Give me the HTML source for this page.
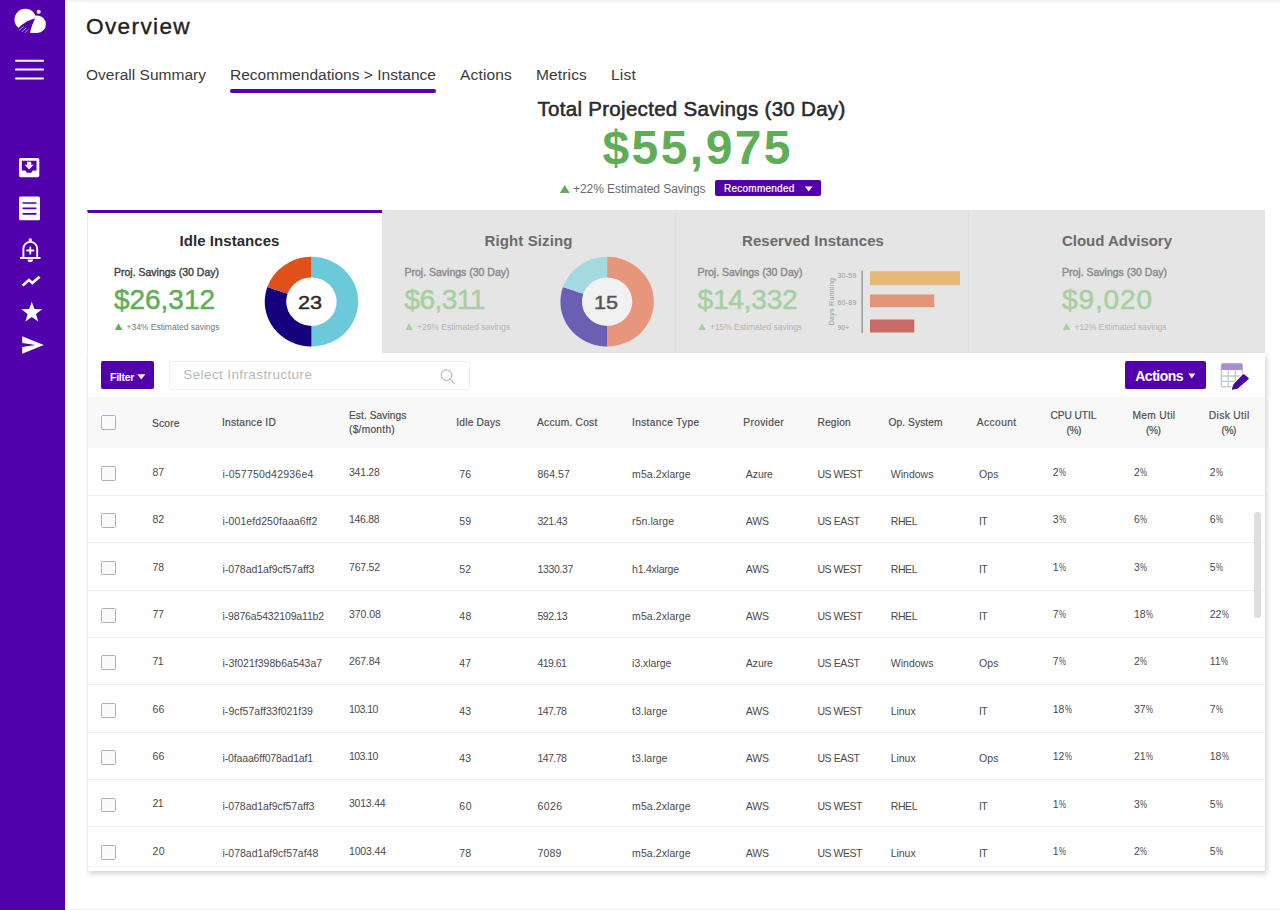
<!DOCTYPE html>
<html lang="en">
<head>
<meta charset="utf-8">
<title>Overview</title>
<style>
*{box-sizing:border-box;margin:0;padding:0}
html,body{width:1280px;height:910px;overflow:hidden;background:#fff}
body{position:relative;font-family:"Liberation Sans",sans-serif}
.t{position:absolute;white-space:nowrap;display:block}
.abs{position:absolute}
.pc{display:inline-block;letter-spacing:0;transform:scaleX(.74);transform-origin:0 50%;margin-left:.3px}
#side{left:0;top:0;width:65px;height:910px;background:#5200ac}
#topline{left:65px;top:0;width:1215px;height:2px;background:#f4f4f4}
#botline{left:65px;top:908.5px;width:1215px;height:1.5px;background:#efefef}
#tabline{left:230px;top:89px;width:206px;height:3.5px;border-radius:2px;background:#5200ac}
#cards{left:87px;top:210px;width:1178px;height:143.5px;background:#e5e5e5}
#card1{left:87px;top:210px;width:294.5px;height:143px;background:#fff;border-top:3.75px solid #5200ac;border-left:1px solid #ececec}
.div{top:211px;width:1px;height:141px;background:#dedede}
#panel{left:87px;top:353px;width:1178px;height:518px;background:#fff;box-shadow:2px 3px 5px rgba(0,0,0,.17);border-left:1px solid #ececec}
#thead{left:88px;top:397px;width:1177px;height:50.5px;background:#f8f8f8}
.rl{left:88px;width:1177px;height:1px;background:#eee}
.cb{left:101px;width:14.8px;height:14.8px;border:1.4px solid #b0b0b0;border-radius:1.5px;background:#fafafa}
.btn{background:#5200ac;border-radius:2px}
#search{left:168.5px;top:360.5px;width:301.5px;height:29px;border:1px solid #efefef;border-radius:2px;background:#fff}
#thumb{left:1254px;top:512px;width:6.5px;height:106px;border-radius:3px;background:#dedede}
</style>
</head>
<body>
<div class="abs" id="topline"></div>
<div class="abs" id="botline"></div>
<div class="abs" id="side"></div>
<!--ICONS-->
<div class="abs" id="tabline"></div>
<div class="abs" id="cards"></div>
<div class="abs div" style="left:675px"></div>
<div class="abs div" style="left:968px"></div>
<div class="abs" id="panel"></div>
<div class="abs" id="card1"></div>
<div class="abs" id="thead"></div>
<div class="abs rl" style="top:494.9px"></div>
<div class="abs rl" style="top:542.2px"></div>
<div class="abs rl" style="top:589.5px"></div>
<div class="abs rl" style="top:636.9px"></div>
<div class="abs rl" style="top:684.2px"></div>
<div class="abs rl" style="top:731.6px"></div>
<div class="abs rl" style="top:779.0px"></div>
<div class="abs rl" style="top:826.3px"></div>
<div class="abs rl" style="top:865.5px;background:#f3f3f3"></div>
<div class="abs cb" style="top:414.8px"></div>
<div class="abs cb" style="top:465.8px"></div>
<div class="abs cb" style="top:513.2px"></div>
<div class="abs cb" style="top:560.6px"></div>
<div class="abs cb" style="top:608.0px"></div>
<div class="abs cb" style="top:655.4px"></div>
<div class="abs cb" style="top:702.8px"></div>
<div class="abs cb" style="top:750.2px"></div>
<div class="abs cb" style="top:797.6px"></div>
<div class="abs cb" style="top:845.0px"></div>
<div class="abs btn" style="left:714.5px;top:180px;width:106px;height:16px"></div>
<div class="abs btn" style="left:101.3px;top:361.4px;width:52.5px;height:28px"></div>
<div class="abs btn" style="left:1124.7px;top:361.4px;width:81.3px;height:28px"></div>
<div class="abs" id="search"></div>
<div class="abs" id="thumb"></div>
<svg class="abs" style="left:0;top:0" width="1280" height="910" viewBox="0 0 1280 910">
<g transform="translate(311.45 301.7) scale(1 .96)"><circle cx="0" cy="0" r="25.7" fill="#fff"/><path d="M0.00 -46.70A46.7 46.7 0 0 1 0.00 46.70L0.00 25.20A25.2 25.2 0 0 0 0.00 -25.20Z" fill="#6cc9da"/><path d="M0.00 46.70A46.7 46.7 0 0 1 -44.16 -15.20L-23.83 -8.20A25.2 25.2 0 0 0 0.00 25.20Z" fill="#15007d"/><path d="M-44.16 -15.20A46.7 46.7 0 0 1 -0.00 -46.70L-0.00 -25.20A25.2 25.2 0 0 0 -23.83 -8.20Z" fill="#e0501b"/></g>
<g transform="translate(607.1 301.7) scale(1 .96)"><circle cx="0" cy="0" r="25.7" fill="#f1f1f1"/><path d="M0.00 -46.70A46.7 46.7 0 0 1 0.00 46.70L0.00 25.20A25.2 25.2 0 0 0 0.00 -25.20Z" fill="#e8967b"/><path d="M0.00 46.70A46.7 46.7 0 0 1 -44.16 -15.20L-23.83 -8.20A25.2 25.2 0 0 0 0.00 25.20Z" fill="#6b5fb3"/><path d="M-44.16 -15.20A46.7 46.7 0 0 1 -0.00 -46.70L-0.00 -25.20A25.2 25.2 0 0 0 -23.83 -8.20Z" fill="#a5d9e1"/></g>
<rect x="861.6" y="270.5" width="1" height="62.5" fill="#777"/>
<rect x="870" y="271.2" width="90" height="14" fill="#e9b978"/>
<rect x="870" y="294.5" width="64.3" height="12.7" fill="#e29579"/>
<rect x="870" y="319.5" width="44.3" height="13" fill="#ca6b69"/>
<path d="M559.8 193L564.75 184.9L569.7 193Z" fill="#5fae57"/>
<path d="M114.8 330L118.55 323.3L122.3 330Z" fill="#5fae57"/>
<path d="M405.3 330L409.05 323.3L412.8 330Z" fill="#a6d0a0"/>
<path d="M698.3 330L702.05 323.3L705.8 330Z" fill="#a6d0a0"/>
<path d="M1062.8 330L1066.55 323.3L1070.3 330Z" fill="#a6d0a0"/>
<path d="M804.9 186.4L812.5 186.4L808.7 191.4Z" fill="#fff"/>
<path d="M137.3 374.2L145.3 374.2L141.3 379.6Z" fill="#fff"/>
<path d="M1188.4 373.6L1195.2 373.6L1191.8000000000002 378.4Z" fill="#fff"/>
<circle cx="446.5" cy="375.2" r="5.3" fill="none" stroke="#b5b5b5" stroke-width="1.1"/><path d="M450.4 379.3L454.3 383.3" stroke="#b5b5b5" stroke-width="1.1" stroke-linecap="round"/>
<g><rect x="1221.3" y="363.6" width="21" height="23.2" rx="1.5" fill="#fff" stroke="#c9c9c9" stroke-width="1.4"/><path d="M1221.3 365.1a1.5 1.5 0 0 1 1.5-1.5h18a1.5 1.5 0 0 1 1.5 1.5v5h-21z" fill="#a98bd6"/><path d="M1221.3 376h21M1221.3 381.3h21M1228.3 370.6v16.2M1235.3 370.6v16.2" stroke="#c9c9c9" stroke-width="1.3" fill="none"/><path d="M1242.2 374.2q1.2-1.2 2.6-.1l3.9 3.1q1.3 1.2.1 2.5L1237.6 389.4 1230.8 390.6 1232.7 384.3z" fill="#4a00a0" stroke="#fff" stroke-width="1.2" stroke-linejoin="round"/></g>
<g fill="#fff"><circle cx="25.4" cy="19.6" r="10.9"/><circle cx="37.2" cy="24.2" r="8.7"/><rect x="24" y="25" width="14" height="7.9"/><circle cx="38.7" cy="11.7" r="2"/></g>
<path d="M35.2 18.3Q27.5 20.4 22.6 24.3L15.5 30.2 18 35 29.7 33.4Q31.6 25 35.2 18.3Z" fill="#5200ac"/><path d="M19.3 30.3l4.6-3.9M21.9 31.9l4.2-3.9M24.9 32.8l3.2-3.4" stroke="#fff" stroke-opacity=".55" stroke-width="1" fill="none"/>
<rect x="15" y="59.8" width="29" height="2" rx="1" fill="#fff"/>
<rect x="15" y="68.6" width="29" height="2" rx="1" fill="#fff"/>
<rect x="15" y="77.4" width="29" height="2" rx="1" fill="#fff"/>
<g><rect x="19" y="158" width="20.3" height="19.2" rx="1.8" fill="#fff"/><path d="M21.8 160.8h14.7v9.6h-3.6l-1.6 2.4h-4.3l-1.6-2.4h-3.6z" fill="#5200ac"/><path d="M27 161.8h4.2v3h2.5l-4.6 4.6-4.6-4.6h2.5z" fill="#fff"/></g>
<g><rect x="19" y="196.6" width="21" height="23.6" rx="1.5" fill="#fff"/><path d="M22.6 203h13.8M22.6 208.4h13.8M22.6 213.8h13.8" stroke="#5200ac" stroke-width="1.7"/></g>
<g fill="none" stroke="#fff" stroke-width="1.9" stroke-linejoin="round" stroke-linecap="round"><path d="M20.8 258h19M23.4 257.8v-9a6.9 6.9 0 0 1 13.8 0v9"/><path d="M30.3 247.3v6.4M27.1 250.5h6.4" stroke-width="1.8"/></g><circle cx="30.3" cy="239.9" r="1.7" fill="#fff"/><path d="M27.6 259.6h5.4a2.7 2.7 0 0 1-5.4 0z" fill="#fff"/>
<path d="M22.6 285.6l6.3-5.6 3.4 3 7.3-6.2" fill="none" stroke="#fff" stroke-width="2.6" stroke-linejoin="miter"/>
<path d="M31.80 301.70L34.39 309.04L42.17 309.23L35.98 313.96L38.21 321.42L31.80 317.00L25.39 321.42L27.62 313.96L21.43 309.23L29.21 309.04Z" fill="#fff"/>
<path d="M22.2 336.2L43.8 345 22.2 353.8l0-6.9L35.5 345 22.2 343.1z" fill="#fff"/>
</svg>
<span class="t" style="left:802.5px;top:296.5px;width:56px;text-align:center;font-size:7px;line-height:9px;color:#999;transform:rotate(-90deg);letter-spacing:.3px">Days Running</span>
<span class="t" style="left:86.0px;top:11.6px;font-size:22.6px;line-height:29px;color:#222;letter-spacing:1.354px;-webkit-text-stroke:0.35px #222;">Overview</span>
<span class="t" style="left:86.0px;top:64.9px;font-size:15.5px;line-height:20px;color:#3a3a3a;letter-spacing:0.019px;">Overall Summary</span>
<span class="t" style="left:230.0px;top:64.9px;font-size:15.5px;line-height:20px;color:#3a3a3a;letter-spacing:0.019px;">Recommendations &gt; Instance</span>
<span class="t" style="left:460.0px;top:64.9px;font-size:15.5px;line-height:20px;color:#3a3a3a;letter-spacing:0.165px;">Actions</span>
<span class="t" style="left:536.0px;top:64.9px;font-size:15.5px;line-height:20px;color:#3a3a3a;letter-spacing:0.150px;">Metrics</span>
<span class="t" style="left:611.0px;top:64.9px;font-size:15.5px;line-height:20px;color:#3a3a3a;letter-spacing:0.219px;">List</span>
<span class="t" style="left:537.5px;top:95.2px;font-size:20.5px;line-height:27px;color:#2a2a2a;letter-spacing:0.296px;-webkit-text-stroke:0.55px #2a2a2a;">Total Projected Savings (30 Day)</span>
<span class="t" style="left:602.5px;top:117.0px;font-size:48px;line-height:62px;color:#5fae57;font-weight:700;letter-spacing:2.426px;">$55,975</span>
<span class="t" style="left:573.0px;top:180.8px;font-size:12px;line-height:16px;color:#6a6a6a;letter-spacing:-0.057px;">+22% Estimated Savings</span>
<span class="t" style="left:724.0px;top:181.9px;font-size:10px;line-height:13px;color:#fff;letter-spacing:0.244px;-webkit-text-stroke:0.2px #fff;">Recommended</span>
<span class="t" style="left:179.5px;top:231.2px;font-size:15px;line-height:20px;color:#2b2b2b;font-weight:700;letter-spacing:0.056px;">Idle Instances</span>
<span class="t" style="left:114.0px;top:264.8px;font-size:10.5px;line-height:14px;color:#444;letter-spacing:-0.002px;-webkit-text-stroke:0.4px #444;">Proj. Savings (30 Day)</span>
<span class="t" style="left:114.0px;top:281.8px;font-size:28px;line-height:36px;color:#5fae57;letter-spacing:-0.031px;-webkit-text-stroke:0.5px #5fae57;">$26,312</span>
<span class="t" style="left:126.5px;top:321.5px;font-size:8.5px;line-height:11px;color:#777;letter-spacing:-0.015px;">+34% Estimated savings</span>
<span class="t" style="left:484.5px;top:231.2px;font-size:15px;line-height:20px;color:#6b6b6b;font-weight:700;letter-spacing:0.112px;">Right Sizing</span>
<span class="t" style="left:404.5px;top:264.8px;font-size:10.5px;line-height:14px;color:#8a8a8a;letter-spacing:-0.002px;-webkit-text-stroke:0.4px #8a8a8a;">Proj. Savings (30 Day)</span>
<span class="t" style="left:404.5px;top:281.8px;font-size:28px;line-height:36px;color:#a6d0a0;letter-spacing:-0.550px;-webkit-text-stroke:0.5px #a6d0a0;">$6,311</span>
<span class="t" style="left:417.0px;top:321.5px;font-size:8.5px;line-height:11px;color:#b4b4b4;letter-spacing:-0.015px;">+26% Estimated savings</span>
<span class="t" style="left:742.0px;top:231.2px;font-size:15px;line-height:20px;color:#6b6b6b;font-weight:700;letter-spacing:0.060px;">Reserved Instances</span>
<span class="t" style="left:697.5px;top:264.8px;font-size:10.5px;line-height:14px;color:#8a8a8a;letter-spacing:-0.002px;-webkit-text-stroke:0.4px #8a8a8a;">Proj. Savings (30 Day)</span>
<span class="t" style="left:697.5px;top:281.8px;font-size:28px;line-height:36px;color:#a6d0a0;letter-spacing:-0.174px;-webkit-text-stroke:0.5px #a6d0a0;">$14,332</span>
<span class="t" style="left:710.0px;top:321.5px;font-size:8.5px;line-height:11px;color:#b4b4b4;letter-spacing:-0.060px;">+15% Estimated savings</span>
<span class="t" style="left:1062.0px;top:231.2px;font-size:15px;line-height:20px;color:#6b6b6b;font-weight:700;letter-spacing:-0.021px;">Cloud Advisory</span>
<span class="t" style="left:1062.0px;top:264.8px;font-size:10.5px;line-height:14px;color:#8a8a8a;letter-spacing:-0.002px;-webkit-text-stroke:0.4px #8a8a8a;">Proj. Savings (30 Day)</span>
<span class="t" style="left:1062.0px;top:281.8px;font-size:28px;line-height:36px;color:#a6d0a0;letter-spacing:0.893px;-webkit-text-stroke:0.5px #a6d0a0;">$9,020</span>
<span class="t" style="left:1074.5px;top:321.5px;font-size:8.5px;line-height:11px;color:#b4b4b4;letter-spacing:-0.060px;">+12% Estimated savings</span>
<span class="t" style="left:298.3px;top:289.7px;font-size:19px;line-height:25px;color:#2a2a2a;transform:scaleX(1.14);transform-origin:0 50%;-webkit-text-stroke:0.45px #2a2a2a;">23</span>
<span class="t" style="left:594.2px;top:289.7px;font-size:19px;line-height:25px;color:#555;transform:scaleX(1.14);transform-origin:0 50%;-webkit-text-stroke:0.45px #555;">15</span>
<span class="t" style="left:837.5px;top:271.3px;font-size:6.8px;line-height:9px;color:#9a9a9a;letter-spacing:0.322px;">30-59</span>
<span class="t" style="left:837.5px;top:297.5px;font-size:6.8px;line-height:9px;color:#9a9a9a;letter-spacing:0.322px;">60-89</span>
<span class="t" style="left:837.5px;top:322.5px;font-size:6.8px;line-height:9px;color:#9a9a9a;letter-spacing:-0.010px;">90+</span>
<span class="t" style="left:110.0px;top:369.8px;font-size:10.5px;line-height:14px;color:#fff;font-weight:700;letter-spacing:-0.279px;">Filter</span>
<span class="t" style="left:183.3px;top:366.0px;font-size:13.5px;line-height:18px;color:#b9b9b9;letter-spacing:0.390px;">Select Infrastructure</span>
<span class="t" style="left:1135.2px;top:366.5px;font-size:14px;line-height:18px;color:#fff;font-weight:700;letter-spacing:-0.478px;">Actions</span>
<span class="t" style="left:152.0px;top:416.8px;font-size:10.2px;line-height:13px;color:#4c4c4c;letter-spacing:0.215px;-webkit-text-stroke:0.18px #4c4c4c;">Score</span>
<span class="t" style="left:222.0px;top:416.1px;font-size:10.2px;line-height:13px;color:#4c4c4c;letter-spacing:0.224px;-webkit-text-stroke:0.18px #4c4c4c;">Instance ID</span>
<span class="t" style="left:349.0px;top:408.8px;font-size:10.2px;line-height:13px;color:#4c4c4c;letter-spacing:0.065px;-webkit-text-stroke:0.18px #4c4c4c;">Est. Savings</span>
<span class="t" style="left:349.0px;top:422.8px;font-size:10.2px;line-height:13px;color:#4c4c4c;letter-spacing:0.266px;-webkit-text-stroke:0.18px #4c4c4c;">($/month)</span>
<span class="t" style="left:456.3px;top:416.1px;font-size:10.2px;line-height:13px;color:#4c4c4c;letter-spacing:0.192px;-webkit-text-stroke:0.18px #4c4c4c;">Idle Days</span>
<span class="t" style="left:537.0px;top:416.1px;font-size:10.2px;line-height:13px;color:#4c4c4c;letter-spacing:0.250px;-webkit-text-stroke:0.18px #4c4c4c;">Accum. Cost</span>
<span class="t" style="left:632.0px;top:416.1px;font-size:10.2px;line-height:13px;color:#4c4c4c;letter-spacing:0.327px;-webkit-text-stroke:0.18px #4c4c4c;">Instance Type</span>
<span class="t" style="left:743.3px;top:416.1px;font-size:10.2px;line-height:13px;color:#4c4c4c;letter-spacing:0.345px;-webkit-text-stroke:0.18px #4c4c4c;">Provider</span>
<span class="t" style="left:817.4px;top:416.1px;font-size:10.2px;line-height:13px;color:#4c4c4c;letter-spacing:0.217px;-webkit-text-stroke:0.18px #4c4c4c;">Region</span>
<span class="t" style="left:888.6px;top:416.1px;font-size:10.2px;line-height:13px;color:#4c4c4c;letter-spacing:0.068px;-webkit-text-stroke:0.18px #4c4c4c;">Op. System</span>
<span class="t" style="left:976.8px;top:416.1px;font-size:10.2px;line-height:13px;color:#4c4c4c;letter-spacing:0.427px;-webkit-text-stroke:0.18px #4c4c4c;">Account</span>
<span class="t" style="left:1050.4px;top:408.8px;font-size:10.2px;line-height:13px;color:#4c4c4c;letter-spacing:-0.065px;-webkit-text-stroke:0.18px #4c4c4c;">CPU UTIL</span>
<span class="t" style="left:1066.5px;top:423.8px;font-size:10.2px;line-height:13px;color:#4c4c4c;letter-spacing:-0.448px;-webkit-text-stroke:0.18px #4c4c4c;">(%)</span>
<span class="t" style="left:1132.4px;top:408.8px;font-size:10.2px;line-height:13px;color:#4c4c4c;letter-spacing:0.364px;-webkit-text-stroke:0.18px #4c4c4c;">Mem Util</span>
<span class="t" style="left:1146.0px;top:423.8px;font-size:10.2px;line-height:13px;color:#4c4c4c;letter-spacing:-0.448px;-webkit-text-stroke:0.18px #4c4c4c;">(%)</span>
<span class="t" style="left:1208.8px;top:408.8px;font-size:10.2px;line-height:13px;color:#4c4c4c;letter-spacing:0.382px;-webkit-text-stroke:0.18px #4c4c4c;">Disk Util</span>
<span class="t" style="left:1221.5px;top:423.8px;font-size:10.2px;line-height:13px;color:#4c4c4c;letter-spacing:-0.448px;-webkit-text-stroke:0.18px #4c4c4c;">(%)</span>
<span class="t" style="left:152.5px;top:464.7px;font-size:10.5px;line-height:14px;color:#4a4a4a;letter-spacing:-0.094px;">87</span>
<span class="t" style="left:222.5px;top:466.8px;font-size:10.5px;line-height:14px;color:#4a4a4a;letter-spacing:0.213px;">i-057750d42936e4</span>
<span class="t" style="left:349.0px;top:464.7px;font-size:10.5px;line-height:14px;color:#4a4a4a;letter-spacing:-0.271px;">341.28</span>
<span class="t" style="left:459.3px;top:466.8px;font-size:10.5px;line-height:14px;color:#4a4a4a;letter-spacing:0.106px;">76</span>
<span class="t" style="left:537.4px;top:466.8px;font-size:10.5px;line-height:14px;color:#4a4a4a;letter-spacing:0.046px;">864.57</span>
<span class="t" style="left:632.1px;top:466.8px;font-size:10.5px;line-height:14px;color:#4a4a4a;letter-spacing:0.074px;">m5a.2xlarge</span>
<span class="t" style="left:745.8px;top:466.8px;font-size:10.5px;line-height:14px;color:#4a4a4a;letter-spacing:-0.087px;">Azure</span>
<span class="t" style="left:817.4px;top:466.8px;font-size:10.5px;line-height:14px;color:#4a4a4a;letter-spacing:-0.463px;">US WEST</span>
<span class="t" style="left:890.8px;top:466.8px;font-size:10.5px;line-height:14px;color:#4a4a4a;letter-spacing:-0.001px;">Windows</span>
<span class="t" style="left:979.0px;top:466.8px;font-size:10.5px;line-height:14px;color:#4a4a4a;letter-spacing:0.178px;">Ops</span>
<span class="t" style="left:1052.7px;top:464.9px;font-size:10.5px;line-height:14px;color:#4a4a4a;">2<span class="pc">%</span></span>
<span class="t" style="left:1134.0px;top:464.9px;font-size:10.5px;line-height:14px;color:#4a4a4a;">2<span class="pc">%</span></span>
<span class="t" style="left:1209.7px;top:464.9px;font-size:10.5px;line-height:14px;color:#4a4a4a;">2<span class="pc">%</span></span>
<span class="t" style="left:152.5px;top:512.1px;font-size:10.5px;line-height:14px;color:#4a4a4a;letter-spacing:-0.094px;">82</span>
<span class="t" style="left:222.5px;top:514.2px;font-size:10.5px;line-height:14px;color:#4a4a4a;letter-spacing:0.093px;">i-001efd250faaa6ff2</span>
<span class="t" style="left:349.0px;top:512.1px;font-size:10.5px;line-height:14px;color:#4a4a4a;letter-spacing:-0.304px;">146.88</span>
<span class="t" style="left:459.3px;top:514.2px;font-size:10.5px;line-height:14px;color:#4a4a4a;letter-spacing:0.106px;">59</span>
<span class="t" style="left:537.4px;top:514.2px;font-size:10.5px;line-height:14px;color:#4a4a4a;letter-spacing:-0.387px;">321.43</span>
<span class="t" style="left:632.1px;top:514.2px;font-size:10.5px;line-height:14px;color:#4a4a4a;letter-spacing:0.061px;">r5n.large</span>
<span class="t" style="left:745.8px;top:514.2px;font-size:10.5px;line-height:14px;color:#4a4a4a;letter-spacing:-0.110px;">AWS</span>
<span class="t" style="left:817.4px;top:514.2px;font-size:10.5px;line-height:14px;color:#4a4a4a;letter-spacing:-0.391px;">US EAST</span>
<span class="t" style="left:890.8px;top:514.2px;font-size:10.5px;line-height:14px;color:#4a4a4a;letter-spacing:-0.429px;">RHEL</span>
<span class="t" style="left:979.0px;top:514.2px;font-size:10.5px;line-height:14px;color:#4a4a4a;letter-spacing:-0.550px;">IT</span>
<span class="t" style="left:1052.7px;top:512.3px;font-size:10.5px;line-height:14px;color:#4a4a4a;">3<span class="pc">%</span></span>
<span class="t" style="left:1134.0px;top:512.3px;font-size:10.5px;line-height:14px;color:#4a4a4a;">6<span class="pc">%</span></span>
<span class="t" style="left:1209.7px;top:512.3px;font-size:10.5px;line-height:14px;color:#4a4a4a;">6<span class="pc">%</span></span>
<span class="t" style="left:152.5px;top:559.5px;font-size:10.5px;line-height:14px;color:#4a4a4a;letter-spacing:-0.094px;">78</span>
<span class="t" style="left:222.5px;top:561.6px;font-size:10.5px;line-height:14px;color:#4a4a4a;letter-spacing:-0.044px;">i-078ad1af9cf57aff3</span>
<span class="t" style="left:349.0px;top:559.5px;font-size:10.5px;line-height:14px;color:#4a4a4a;letter-spacing:-0.204px;">767.52</span>
<span class="t" style="left:459.3px;top:561.6px;font-size:10.5px;line-height:14px;color:#4a4a4a;letter-spacing:0.106px;">52</span>
<span class="t" style="left:537.4px;top:561.6px;font-size:10.5px;line-height:14px;color:#4a4a4a;letter-spacing:-0.338px;">1330.37</span>
<span class="t" style="left:632.1px;top:561.6px;font-size:10.5px;line-height:14px;color:#4a4a4a;letter-spacing:-0.235px;">h1.4xlarge</span>
<span class="t" style="left:745.8px;top:561.6px;font-size:10.5px;line-height:14px;color:#4a4a4a;letter-spacing:-0.110px;">AWS</span>
<span class="t" style="left:817.4px;top:561.6px;font-size:10.5px;line-height:14px;color:#4a4a4a;letter-spacing:-0.463px;">US WEST</span>
<span class="t" style="left:890.8px;top:561.6px;font-size:10.5px;line-height:14px;color:#4a4a4a;letter-spacing:-0.429px;">RHEL</span>
<span class="t" style="left:979.0px;top:561.6px;font-size:10.5px;line-height:14px;color:#4a4a4a;letter-spacing:-0.550px;">IT</span>
<span class="t" style="left:1052.7px;top:559.7px;font-size:10.5px;line-height:14px;color:#4a4a4a;">1<span class="pc">%</span></span>
<span class="t" style="left:1134.0px;top:559.7px;font-size:10.5px;line-height:14px;color:#4a4a4a;">3<span class="pc">%</span></span>
<span class="t" style="left:1209.7px;top:559.7px;font-size:10.5px;line-height:14px;color:#4a4a4a;">5<span class="pc">%</span></span>
<span class="t" style="left:152.5px;top:606.8px;font-size:10.5px;line-height:14px;color:#4a4a4a;letter-spacing:-0.344px;">77</span>
<span class="t" style="left:222.5px;top:608.9px;font-size:10.5px;line-height:14px;color:#4a4a4a;letter-spacing:-0.149px;">i-9876a5432109a11b2</span>
<span class="t" style="left:349.0px;top:606.8px;font-size:10.5px;line-height:14px;color:#4a4a4a;letter-spacing:-0.071px;">370.08</span>
<span class="t" style="left:459.3px;top:608.9px;font-size:10.5px;line-height:14px;color:#4a4a4a;letter-spacing:0.256px;">48</span>
<span class="t" style="left:537.4px;top:608.9px;font-size:10.5px;line-height:14px;color:#4a4a4a;letter-spacing:-0.387px;">592.13</span>
<span class="t" style="left:632.1px;top:608.9px;font-size:10.5px;line-height:14px;color:#4a4a4a;letter-spacing:0.074px;">m5a.2xlarge</span>
<span class="t" style="left:745.8px;top:608.9px;font-size:10.5px;line-height:14px;color:#4a4a4a;letter-spacing:-0.110px;">AWS</span>
<span class="t" style="left:817.4px;top:608.9px;font-size:10.5px;line-height:14px;color:#4a4a4a;letter-spacing:-0.463px;">US WEST</span>
<span class="t" style="left:890.8px;top:608.9px;font-size:10.5px;line-height:14px;color:#4a4a4a;letter-spacing:-0.429px;">RHEL</span>
<span class="t" style="left:979.0px;top:608.9px;font-size:10.5px;line-height:14px;color:#4a4a4a;letter-spacing:-0.550px;">IT</span>
<span class="t" style="left:1052.7px;top:607.0px;font-size:10.5px;line-height:14px;color:#4a4a4a;">7<span class="pc">%</span></span>
<span class="t" style="left:1134.0px;top:607.0px;font-size:10.5px;line-height:14px;color:#4a4a4a;">18<span class="pc">%</span></span>
<span class="t" style="left:1209.7px;top:607.0px;font-size:10.5px;line-height:14px;color:#4a4a4a;">22<span class="pc">%</span></span>
<span class="t" style="left:152.5px;top:654.2px;font-size:10.5px;line-height:14px;color:#4a4a4a;letter-spacing:-0.550px;">71</span>
<span class="t" style="left:222.5px;top:656.3px;font-size:10.5px;line-height:14px;color:#4a4a4a;letter-spacing:0.023px;">i-3f021f398b6a543a7</span>
<span class="t" style="left:349.0px;top:654.2px;font-size:10.5px;line-height:14px;color:#4a4a4a;letter-spacing:-0.171px;">267.84</span>
<span class="t" style="left:459.3px;top:656.3px;font-size:10.5px;line-height:14px;color:#4a4a4a;letter-spacing:0.106px;">47</span>
<span class="t" style="left:537.4px;top:656.3px;font-size:10.5px;line-height:14px;color:#4a4a4a;letter-spacing:-0.550px;">419.61</span>
<span class="t" style="left:632.1px;top:656.3px;font-size:10.5px;line-height:14px;color:#4a4a4a;letter-spacing:-0.045px;">i3.xlarge</span>
<span class="t" style="left:745.8px;top:656.3px;font-size:10.5px;line-height:14px;color:#4a4a4a;letter-spacing:-0.087px;">Azure</span>
<span class="t" style="left:817.4px;top:656.3px;font-size:10.5px;line-height:14px;color:#4a4a4a;letter-spacing:-0.391px;">US EAST</span>
<span class="t" style="left:890.8px;top:656.3px;font-size:10.5px;line-height:14px;color:#4a4a4a;letter-spacing:-0.001px;">Windows</span>
<span class="t" style="left:979.0px;top:656.3px;font-size:10.5px;line-height:14px;color:#4a4a4a;letter-spacing:0.178px;">Ops</span>
<span class="t" style="left:1052.7px;top:654.4px;font-size:10.5px;line-height:14px;color:#4a4a4a;">7<span class="pc">%</span></span>
<span class="t" style="left:1134.0px;top:654.4px;font-size:10.5px;line-height:14px;color:#4a4a4a;">2<span class="pc">%</span></span>
<span class="t" style="left:1209.7px;top:654.4px;font-size:10.5px;line-height:14px;color:#4a4a4a;">11<span class="pc">%</span></span>
<span class="t" style="left:152.5px;top:701.6px;font-size:10.5px;line-height:14px;color:#4a4a4a;letter-spacing:0.156px;">66</span>
<span class="t" style="left:222.5px;top:703.7px;font-size:10.5px;line-height:14px;color:#4a4a4a;letter-spacing:0.041px;">i-9cf57aff33f021f39</span>
<span class="t" style="left:349.0px;top:701.6px;font-size:10.5px;line-height:14px;color:#4a4a4a;letter-spacing:-0.550px;">103.10</span>
<span class="t" style="left:459.3px;top:703.7px;font-size:10.5px;line-height:14px;color:#4a4a4a;letter-spacing:0.106px;">43</span>
<span class="t" style="left:537.4px;top:703.7px;font-size:10.5px;line-height:14px;color:#4a4a4a;letter-spacing:-0.550px;">147.78</span>
<span class="t" style="left:632.1px;top:703.7px;font-size:10.5px;line-height:14px;color:#4a4a4a;letter-spacing:0.046px;">t3.large</span>
<span class="t" style="left:745.8px;top:703.7px;font-size:10.5px;line-height:14px;color:#4a4a4a;letter-spacing:-0.110px;">AWS</span>
<span class="t" style="left:817.4px;top:703.7px;font-size:10.5px;line-height:14px;color:#4a4a4a;letter-spacing:-0.463px;">US WEST</span>
<span class="t" style="left:890.8px;top:703.7px;font-size:10.5px;line-height:14px;color:#4a4a4a;letter-spacing:-0.062px;">Linux</span>
<span class="t" style="left:979.0px;top:703.7px;font-size:10.5px;line-height:14px;color:#4a4a4a;letter-spacing:-0.550px;">IT</span>
<span class="t" style="left:1052.7px;top:701.8px;font-size:10.5px;line-height:14px;color:#4a4a4a;">18<span class="pc">%</span></span>
<span class="t" style="left:1134.0px;top:701.8px;font-size:10.5px;line-height:14px;color:#4a4a4a;">37<span class="pc">%</span></span>
<span class="t" style="left:1209.7px;top:701.8px;font-size:10.5px;line-height:14px;color:#4a4a4a;">7<span class="pc">%</span></span>
<span class="t" style="left:152.5px;top:749.0px;font-size:10.5px;line-height:14px;color:#4a4a4a;letter-spacing:0.156px;">66</span>
<span class="t" style="left:222.5px;top:751.1px;font-size:10.5px;line-height:14px;color:#4a4a4a;letter-spacing:-0.144px;">i-0faaa6ff078ad1af1</span>
<span class="t" style="left:349.0px;top:749.0px;font-size:10.5px;line-height:14px;color:#4a4a4a;letter-spacing:-0.550px;">103.10</span>
<span class="t" style="left:459.3px;top:751.1px;font-size:10.5px;line-height:14px;color:#4a4a4a;letter-spacing:0.106px;">43</span>
<span class="t" style="left:537.4px;top:751.1px;font-size:10.5px;line-height:14px;color:#4a4a4a;letter-spacing:-0.550px;">147.78</span>
<span class="t" style="left:632.1px;top:751.1px;font-size:10.5px;line-height:14px;color:#4a4a4a;letter-spacing:0.046px;">t3.large</span>
<span class="t" style="left:745.8px;top:751.1px;font-size:10.5px;line-height:14px;color:#4a4a4a;letter-spacing:-0.110px;">AWS</span>
<span class="t" style="left:817.4px;top:751.1px;font-size:10.5px;line-height:14px;color:#4a4a4a;letter-spacing:-0.391px;">US EAST</span>
<span class="t" style="left:890.8px;top:751.1px;font-size:10.5px;line-height:14px;color:#4a4a4a;letter-spacing:-0.062px;">Linux</span>
<span class="t" style="left:979.0px;top:751.1px;font-size:10.5px;line-height:14px;color:#4a4a4a;letter-spacing:0.178px;">Ops</span>
<span class="t" style="left:1052.7px;top:749.2px;font-size:10.5px;line-height:14px;color:#4a4a4a;">12<span class="pc">%</span></span>
<span class="t" style="left:1134.0px;top:749.2px;font-size:10.5px;line-height:14px;color:#4a4a4a;">21<span class="pc">%</span></span>
<span class="t" style="left:1209.7px;top:749.2px;font-size:10.5px;line-height:14px;color:#4a4a4a;">18<span class="pc">%</span></span>
<span class="t" style="left:152.5px;top:796.4px;font-size:10.5px;line-height:14px;color:#4a4a4a;letter-spacing:-0.550px;">21</span>
<span class="t" style="left:222.5px;top:798.5px;font-size:10.5px;line-height:14px;color:#4a4a4a;letter-spacing:-0.044px;">i-078ad1af9cf57aff3</span>
<span class="t" style="left:349.0px;top:796.4px;font-size:10.5px;line-height:14px;color:#4a4a4a;letter-spacing:-0.224px;">3013.44</span>
<span class="t" style="left:459.3px;top:798.5px;font-size:10.5px;line-height:14px;color:#4a4a4a;letter-spacing:0.506px;">60</span>
<span class="t" style="left:537.4px;top:798.5px;font-size:10.5px;line-height:14px;color:#4a4a4a;letter-spacing:0.410px;">6026</span>
<span class="t" style="left:632.1px;top:798.5px;font-size:10.5px;line-height:14px;color:#4a4a4a;letter-spacing:0.074px;">m5a.2xlarge</span>
<span class="t" style="left:745.8px;top:798.5px;font-size:10.5px;line-height:14px;color:#4a4a4a;letter-spacing:-0.110px;">AWS</span>
<span class="t" style="left:817.4px;top:798.5px;font-size:10.5px;line-height:14px;color:#4a4a4a;letter-spacing:-0.463px;">US WEST</span>
<span class="t" style="left:890.8px;top:798.5px;font-size:10.5px;line-height:14px;color:#4a4a4a;letter-spacing:-0.429px;">RHEL</span>
<span class="t" style="left:979.0px;top:798.5px;font-size:10.5px;line-height:14px;color:#4a4a4a;letter-spacing:-0.550px;">IT</span>
<span class="t" style="left:1052.7px;top:796.6px;font-size:10.5px;line-height:14px;color:#4a4a4a;">1<span class="pc">%</span></span>
<span class="t" style="left:1134.0px;top:796.6px;font-size:10.5px;line-height:14px;color:#4a4a4a;">3<span class="pc">%</span></span>
<span class="t" style="left:1209.7px;top:796.6px;font-size:10.5px;line-height:14px;color:#4a4a4a;">5<span class="pc">%</span></span>
<span class="t" style="left:152.5px;top:843.7px;font-size:10.5px;line-height:14px;color:#4a4a4a;letter-spacing:0.306px;">20</span>
<span class="t" style="left:222.5px;top:845.8px;font-size:10.5px;line-height:14px;color:#4a4a4a;letter-spacing:0.003px;">i-078ad1af9cf57af48</span>
<span class="t" style="left:349.0px;top:843.7px;font-size:10.5px;line-height:14px;color:#4a4a4a;letter-spacing:-0.153px;">1003.44</span>
<span class="t" style="left:459.3px;top:845.8px;font-size:10.5px;line-height:14px;color:#4a4a4a;letter-spacing:0.106px;">78</span>
<span class="t" style="left:537.4px;top:845.8px;font-size:10.5px;line-height:14px;color:#4a4a4a;letter-spacing:0.160px;">7089</span>
<span class="t" style="left:632.1px;top:845.8px;font-size:10.5px;line-height:14px;color:#4a4a4a;letter-spacing:0.074px;">m5a.2xlarge</span>
<span class="t" style="left:745.8px;top:845.8px;font-size:10.5px;line-height:14px;color:#4a4a4a;letter-spacing:-0.110px;">AWS</span>
<span class="t" style="left:817.4px;top:845.8px;font-size:10.5px;line-height:14px;color:#4a4a4a;letter-spacing:-0.463px;">US WEST</span>
<span class="t" style="left:890.8px;top:845.8px;font-size:10.5px;line-height:14px;color:#4a4a4a;letter-spacing:-0.062px;">Linux</span>
<span class="t" style="left:979.0px;top:845.8px;font-size:10.5px;line-height:14px;color:#4a4a4a;letter-spacing:-0.550px;">IT</span>
<span class="t" style="left:1052.7px;top:843.9px;font-size:10.5px;line-height:14px;color:#4a4a4a;">1<span class="pc">%</span></span>
<span class="t" style="left:1134.0px;top:843.9px;font-size:10.5px;line-height:14px;color:#4a4a4a;">2<span class="pc">%</span></span>
<span class="t" style="left:1209.7px;top:843.9px;font-size:10.5px;line-height:14px;color:#4a4a4a;">5<span class="pc">%</span></span>
</body>
</html>
